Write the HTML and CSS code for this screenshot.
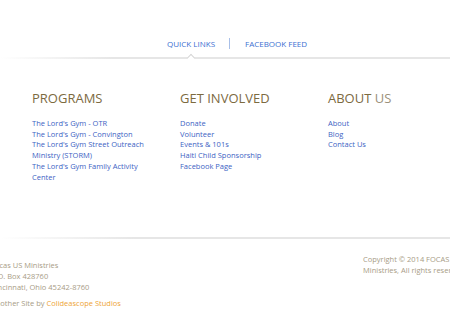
FILE: index.html
```html
<!DOCTYPE html>
<html lang="en">
<head>
    <meta charset="UTF-8">
    <meta name="viewport" content="width=device-width, initial-scale=1.0">
    <title>Footer</title>
    <link rel="stylesheet" href="styles.css">
</head>
<body>
    <div class="tabs-wrap">
        <nav class="tabs">
            <a href="#" class="tab active">Quick Links</a>
            <span class="tab-sep"></span>
            <a href="#" class="tab">Facebook Feed</a>
        </nav>
        <div class="rule"></div>
        <span class="caret"></span>
    </div>

    <div class="columns">
        <div class="col">
            <h2>Programs</h2>
            <ul>
                <li><a href="#">The Lord's Gym - OTR</a></li>
                <li><a href="#">The Lord's Gym - Convington</a></li>
                <li><a href="#">The Lord's Gym Street Outreach Ministry (STORM)</a></li>
                <li><a href="#">The Lord's Gym Family Activity Center</a></li>
            </ul>
        </div>
        <div class="col">
            <h2>Get Involved</h2>
            <ul>
                <li><a href="#">Donate</a></li>
                <li><a href="#">Volunteer</a></li>
                <li><a href="#">Events &amp; 101s</a></li>
                <li><a href="#">Haiti Child Sponsorship</a></li>
                <li><a href="#">Facebook Page</a></li>
            </ul>
        </div>
        <div class="col">
            <h2>About <span class="light">Us</span></h2>
            <ul>
                <li><a href="#">About</a></li>
                <li><a href="#">Blog</a></li>
                <li><a href="#">Contact Us</a></li>
            </ul>
        </div>
    </div>

    <div class="rule bottom-rule"></div>

    <footer class="footer">
        <div class="footer-inner">
            <div class="address">
                <p>Focas US Ministries</p>
                <p>P.O. Box 428760</p>
                <p>Cincinnati, Ohio 45242-8760</p>
                <p class="credit">Another Site by <a href="#">Colideascope Studios</a></p>
            </div>
            <div class="copyright">
                <p>Copyright &copy; 2014 FOCAS US<br>Ministries, All rights reserved.</p>
            </div>
        </div>
    </footer>
</body>
</html>
```

FILE: styles.css
```css
* {
    margin: 0;
    padding: 0;
    box-sizing: border-box;
}

body {
    font-family: 'Open Sans', 'Liberation Sans', sans-serif;
    background: white;
    width: 450px;
    height: 327px;
    overflow: hidden;
}

a {
    text-decoration: none;
}

ul {
    list-style: none;
}

.tabs-wrap {
    position: relative;
    padding-top: 37px;
}

.tabs {
    display: flex;
    align-items: center;
    padding-left: 167px;
    height: 13px;
}

.tab {
    color: #3d6fd1;
    font-size: 8px;
    text-transform: uppercase;
    line-height: 13px;
}

.tab-sep {
    width: 1px;
    height: 11px;
    background: #a8bfe8;
    margin: 0 15px 0 14px;
}

.rule {
    height: 2px;
    margin-top: 7px;
    background: linear-gradient(to right, #fff 0%, #e6e6e6 25%, #e6e6e6 100%);
}

.caret {
    position: absolute;
    left: 188px;
    top: 55px;
    width: 6px;
    height: 6px;
    border-left: 1px solid #d6d6d6;
    border-top: 1px solid #d6d6d6;
    background: white;
    transform: rotate(45deg);
}

.columns {
    display: flex;
    padding: 30px 0 0 32px;
    height: 178px;
}

.col {
    flex: 0 0 148px;
}

.col h2 {
    font-size: 13px;
    font-weight: normal;
    text-transform: uppercase;
    color: #7c6a3f;
    line-height: 19px;
    margin-bottom: 10px;
}

.col h2 .light {
    color: #9b917a;
}

.col ul {
    width: 116px;
}

.col li {
    font-size: 7.5px;
    line-height: 10.7px;
}

.col li a {
    color: #3d63c4;
}

.bottom-rule {
    margin-top: 0;
    background: linear-gradient(to right, #fff 0%, #e6e6e6 30%, #e6e6e6 100%);
}

.footer {
    display: flex;
    justify-content: center;
    padding-top: 15px;
}

.footer-inner {
    display: flex;
    justify-content: space-between;
    flex: 0 0 auto;
    width: 468px;
}

.address {
    padding-top: 6px;
}

.address p,
.copyright p {
    font-size: 7.5px;
    line-height: 11px;
    color: #a89c86;
}

.address .credit {
    margin-top: 5px;
}

.credit a {
    color: #eea437;
}

.copyright {
    width: 96px;
    white-space: nowrap;
}
```
